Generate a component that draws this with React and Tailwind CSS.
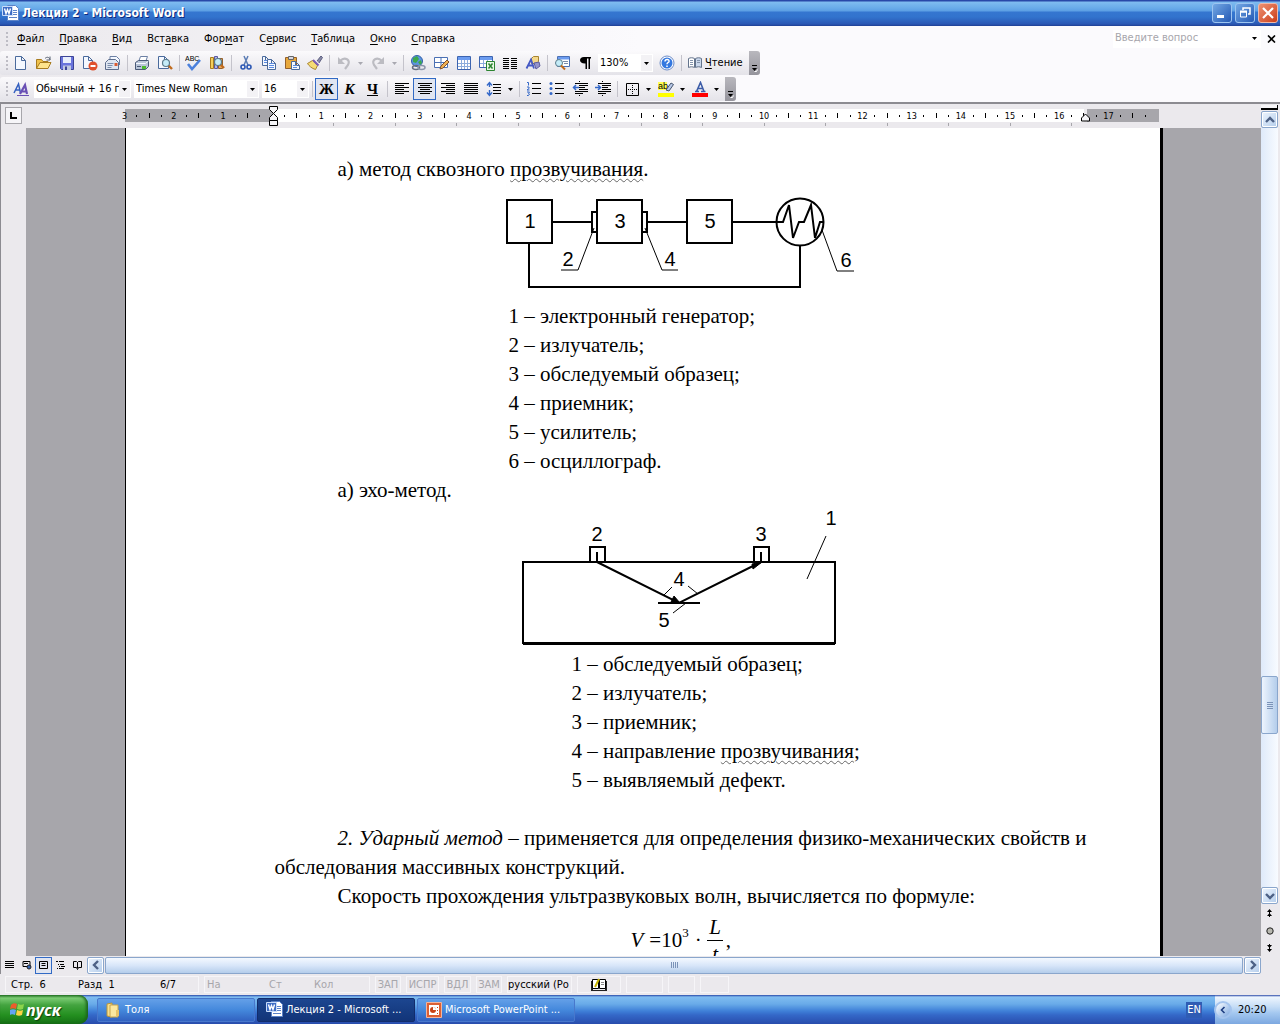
import React from "react";

function Svg({ w = 16, h = 16, children, className = "" }) {
  return (
    <svg width={w} height={h} viewBox={`0 0 ${w} ${h}`} fill="none" className={`shrink-0 ${className}`} aria-hidden="true">
      {children}
    </svg>
  );
}

const Page = ({ x = 2, y = 1, w = 10, h = 14 }) => (
  <path
    d={`M${x + 0.5} ${y + 0.5}H${x + w - 3.5}L${x + w + 0.5} ${y + 4.5}V${y + h - 0.5}H${x + 0.5}ZM${x + w - 3.5} ${y + 0.5}V${y + 4.5}H${x + w + 0.5}`}
    fill="#f4f8ff"
    stroke="#4a6a9c"
  />
);
const Lens = ({ x, y }) => (
  <g>
    <path d={`M${x + 2} ${y + 2}l4 4`} stroke="#c06a1c" strokeWidth="2.4" />
    <circle cx={x} cy={y} r="3.5" fill="#c4ecf8" stroke="#5b7c8c" strokeWidth="1.2" />
  </g>
);

const icons = {
  word: (
    <Svg w={17} h={17}>
      <path d="M5.500 .5h8l3 3v12h-11z" fill="#fff" stroke="#5b83c8" />
      <path d="M11 5.500h4M11 7.500h4M11 9.500h4M7 12.500h8" stroke="#5b83c8" />
      <path d="M.5 1.500h10v9h-10z" fill="#3d6cc4" stroke="#c8dcfa" />
      <path d="M2.500 3.500l1.500 5 1.500-4 1.500 4 1.500-5" stroke="#fff" strokeWidth="1.400" />
    </Svg>
  ),
  fresh: <Svg><Page x={2} y={1} w={10} h={14} /></Svg>,
  open: (
    <Svg w={18}>
      <path d="M1.500 13.500v-9h5l1.500 2h5v2" fill="#f0c24c" stroke="#a87c20" />
      <path d="M1.500 13.500l3.500-6h11l-3 6z" fill="#ffe48c" stroke="#a87c20" />
      <path d="M10 3.500c2-2 4-1.500 5 1m0-3v3.500h-3.500" stroke="#555f70" />
    </Svg>
  ),
  save: (
    <Svg>
      <path d="M1.500 1.500h13v13h-12l-1-1z" fill="#6a74dc" stroke="#3c4496" />
      <path d="M4 2h8v6H4z" fill="#e8eefc" />
      <path d="M4 10.500h8V15H4z" fill="#c0c8e0" />
      <path d="M6 11.500h2V15H6z" fill="#3c4496" />
    </Svg>
  ),
  perm: (
    <Svg>
      <Page x={1} y={1} w={9} h={13} />
      <circle cx="11" cy="11" r="4.500" fill="#e0502c" />
      <path d="M8.500 11h5" stroke="#fff" strokeWidth="2" />
    </Svg>
  ),
  mail: (
    <Svg>
      <path d="M5 5V1.500h6.500l3 3V10" fill="#f4f8ff" stroke="#6c80a4" />
      <path d="M.5 7.500l3-3h7l3 3v7H.5z" fill="#dfe6f2" stroke="#5c6c8c" />
      <path d="M2.500 8.500h6M2.500 10.500h5M2.500 12.500h4" stroke="#7b8caa" />
      <path d="M9.500 8h3v3h-3z" fill="#dc5a30" />
    </Svg>
  ),
  print: (
    <Svg>
      <path d="M4.500 7l2-5.500h7l-2 5.500" fill="#fff" stroke="#6c80a4" />
      <path d="M1.500 7.500l3-2h10v6l-3 3h-10z" fill="#b9c5d8" stroke="#4a5a78" />
      <path d="M2 8.500h9.500l3-2.500" stroke="#f4f8ff" />
      <path d="M8 11h4v3H8z" fill="#4cba30" />
      <path d="M3 11.500h4" stroke="#4a5a78" />
    </Svg>
  ),
  preview: <Svg><Page x={1} y={1} w={10} h={13} /><Lens x={9} y={8} /></Svg>,
  spell: (
    <Svg w={18}>
      <text x="0" y="6" fontSize="7" fontFamily="Liberation Sans" fill="#000">ABC</text>
      <path d="M3 9l4 5 8-9" stroke="#4b80dc" strokeWidth="2.600" />
    </Svg>
  ),
  research: (
    <Svg>
      <path d="M1.500 2.500h3v11h-3z" fill="#f4cf5c" stroke="#a87c20" />
      <path d="M5.500 1.500h3v12h-3z" fill="#b4b4e8" stroke="#5a5aa0" />
      <path d="M9.500 3.500h4v10h-4z" fill="#e8a860" stroke="#94602c" />
      <Lens x={9} y={7} />
    </Svg>
  ),
  cut: (
    <Svg>
      <path d="M6 1l4 9M10 1L6 10" stroke="#5b7cb4" strokeWidth="1.500" />
      <circle cx="5" cy="12" r="2" stroke="#2c58b4" strokeWidth="1.600" />
      <circle cx="11" cy="12" r="2" stroke="#2c58b4" strokeWidth="1.600" />
    </Svg>
  ),
  copy: (
    <Svg>
      <Page x={1} y={1} w={7} h={10} />
      <path d="M3 5.500h4M3 7.500h4" stroke="#5b8be0" />
      <Page x={6} y={4} w={8} h={11} />
      <path d="M8 8.500h5M8 10.500h5M8 12.500h5" stroke="#5b8be0" />
    </Svg>
  ),
  paste: (
    <Svg>
      <path d="M1.500 2.500h11v11h-11z" fill="#e8a83c" stroke="#94602c" />
      <path d="M4.500 1.500h5v3h-5z" fill="#d8d8e0" stroke="#666" />
      <Page x={7} y={6} w={8} h={9} />
      <path d="M9 10.500h4M9 12.500h4" stroke="#5b8be0" />
    </Svg>
  ),
  brush: (
    <Svg>
      <path d="M10 6l4-5 1.500 1.500L12 8" fill="#8a8ca8" stroke="#5c5e80" />
      <path d="M5.500 5.500l5 5-2 4C5 13.500 2 11 .5 8.500z" fill="#f6dc74" stroke="#a88430" />
      <path d="M6 5l5.500 5.500" stroke="#7b5cb4" strokeWidth="2" />
    </Svg>
  ),
  undo: (
    <Svg>
      <path d="M4 6c5-5 11-1 8 4l-3 4" stroke="#bcbcc2" strokeWidth="2.200" />
      <path d="M2 2v7h7z" fill="#bcbcc2" />
    </Svg>
  ),
  redo: (
    <Svg>
      <path d="M12 6C7 1 1 5 4 10l3 4" stroke="#bcbcc2" strokeWidth="2.200" />
      <path d="M14 2v7H7z" fill="#bcbcc2" />
    </Svg>
  ),
  link: (
    <Svg>
      <circle cx="7" cy="6" r="5.500" fill="#5b94e0" stroke="#3460a8" />
      <path d="M3 3l4-2 2 3-3 4-3-1zM8 7l3-2 1 3-2 2z" fill="#3ca84c" />
      <ellipse cx="6" cy="12.500" rx="3.500" ry="2" stroke="#666e80" strokeWidth="1.500" />
      <ellipse cx="11.500" cy="12.500" rx="3.500" ry="2" stroke="#8c96aa" strokeWidth="1.500" />
    </Svg>
  ),
  drawTable: (
    <Svg>
      <path d="M1.500 2.500h13v10h-13zM8 3v9M2 7.500h12" fill="#fff" stroke="#4b70b4" />
      <path d="M7 14l1-3 6-6 2 2-6 6z" fill="#f0b050" stroke="#80502c" />
    </Svg>
  ),
  table: (
    <Svg>
      <path d="M1.500 1.500h13v13h-13z" fill="#fff" stroke="#3c64b0" />
      <path d="M2 2h12v3H2z" fill="#6c9cf0" />
      <path d="M5.500 5v9M8.500 5v9M11.500 5v9M2 8.500h12M2 11.500h12" stroke="#8cacdc" />
    </Svg>
  ),
  excel: (
    <Svg>
      <path d="M.5 1.500h13v11H.5z" fill="#fff" stroke="#3c64b0" />
      <path d="M1 2h12v3H1z" fill="#6c9cf0" />
      <path d="M4.500 5v7M8.500 5v7M1 8.500h12" stroke="#8cacdc" />
      <path d="M7.500 6.500h8v9h-8z" fill="#e8f8e4" stroke="#2c8430" />
      <path d="M9.500 8.500l4 5M13.500 8.500l-4 5" stroke="#2c8430" strokeWidth="1.500" />
    </Svg>
  ),
  columns: (
    <Svg>
      <path d="M1 3.500h6M9 3.500h6M1 5.500h6M9 5.500h6M1 7.500h6M9 7.500h6M1 9.500h6M9 9.500h6M1 11.500h6M9 11.500h6M1 13.500h6M9 13.500h6" stroke="#000" />
    </Svg>
  ),
  drawing: (
    <Svg>
      <path d="M6.500 3.500l2-2h5v5l-2 2h-5z" fill="#f4d88c" stroke="#a88430" />
      <path d="M9 8l5-1 1 4-4 3z" fill="#9494cc" stroke="#5c5ca0" />
      <path d="M1.500 13.500L6 4.500l3 9M3 10.500h5" stroke="#4458c4" strokeWidth="1.800" />
    </Svg>
  ),
  map: (
    <Svg>
      <path d="M3.500 1.500h12v10h-12z" fill="#fff" stroke="#4b70b4" />
      <path d="M4 2h11v2.500H4z" fill="#6c9cf0" />
      <path d="M9 6.500h5M10 8.500h4" stroke="#7b8caa" />
      <circle cx="5" cy="8" r="3.500" fill="#c4ecf8" stroke="#5b7c8c" />
      <path d="M7 10.500l4 4" stroke="#c06a1c" strokeWidth="2" />
    </Svg>
  ),
  pilcrow: (
    <Svg>
      <path d="M7 2h7v1.500h-1V14h-1.500V3.500H10V14H8.500V8.500C1.500 9 1.500 2 7 2z" fill="#000" />
    </Svg>
  ),
  help: (
    <Svg>
      <circle cx="8" cy="8" r="7" fill="#fff" stroke="#6c8cc8" />
      <circle cx="8" cy="8" r="5.500" fill="#3478e0" />
      <path d="M6 6.500c0-3 4.500-2.500 4 0-.3 1-2 1.200-2 2.700M8 10.500v1.500" stroke="#fff" strokeWidth="1.500" />
    </Svg>
  ),
  book: (
    <Svg>
      <path d="M1.500 3.500c2-1 4-1 6 0v9c-2-1-4-1-6 0z" fill="#fff" stroke="#64748c" />
      <path d="M8.500 3.500c2-1 4-1 6 0v9c-2-1-4-1-6 0z" fill="#cbd8ec" stroke="#64748c" />
      <path d="M3 5.500h3M3 7.500h3M3 9.500h3M10 5.500h3M10 7.500h3" stroke="#8494ac" />
    </Svg>
  ),
  styles: (
    <Svg>
      <path d="M1 12L5.500 3l2 9M3 9h4" stroke="#3460c0" strokeWidth="1.500" />
      <path d="M7 13l5-9 2 9M8.500 10.500h5" stroke="#6a50b4" strokeWidth="2.200" />
      <path d="M4 14.500h12" stroke="#6a50b4" />
    </Svg>
  ),
  left: <Svg><path d="M1 2.500h14M1 4.500h9M1 6.500h14M1 8.500h9M1 10.500h14M1 12.500h9" stroke="#000" /></Svg>,
  center: <Svg><path d="M1 2.500h14M3 4.500h10M1 6.500h14M3 8.500h10M1 10.500h14M3 12.500h10" stroke="#000" /></Svg>,
  right: <Svg><path d="M1 2.500h14M6 4.500h9M1 6.500h14M6 8.500h9M1 10.500h14M6 12.500h9" stroke="#000" /></Svg>,
  justify: <Svg><path d="M1 2.500h14M1 4.500h14M1 6.500h14M1 8.500h14M1 10.500h14M1 12.500h14" stroke="#000" /></Svg>,
  spacing: (
    <Svg>
      <path d="M7 3.500h8M7 6.500h8M7 9.500h8M7 12.500h8" stroke="#000" />
      <path d="M3.500 2v4M3.500 9v5M1 4.500l2.500-3 2.500 3M1 11.500l2.500 3 2.500-3" stroke="#3468c8" strokeWidth="1.400" />
    </Svg>
  ),
  numbers: (
    <Svg>
      <path d="M6 2.500h9M6 7.500h9M6 12.500h9" stroke="#000" />
      <path d="M1 1.500h1.500v3M1 6h2v1.500l-2 1.500h2.500M1 11h2.500l-1 1.500 1 .5-1 1.500H1" stroke="#3468c8" />
    </Svg>
  ),
  bullets: (
    <Svg>
      <path d="M6 2.500h9M6 7.500h9M6 12.500h9" stroke="#000" />
      <circle cx="2" cy="2.500" r="1.500" fill="#3468c8" /><circle cx="2" cy="7.500" r="1.500" fill="#3468c8" /><circle cx="2" cy="12.500" r="1.500" fill="#3468c8" />
    </Svg>
  ),
  outdent: (
    <Svg>
      <path d="M3 2.500h13M8 4.500h8M8 6.500h5M8 8.500h8M3 10.500h13M3 12.500h8" stroke="#000" />
      <path d="M7.500 0v15" stroke="#000" strokeDasharray="1 1" />
      <path d="M1 6.500h6M4 4L1.500 6.500 4 9" stroke="#3468c8" strokeWidth="1.500" />
    </Svg>
  ),
  indent: (
    <Svg>
      <path d="M3 2.500h13M8 4.500h8M8 6.500h5M8 8.500h8M3 10.500h13M3 12.500h8" stroke="#000" />
      <path d="M7.500 0v15" stroke="#000" strokeDasharray="1 1" />
      <path d="M0 6.500h6M3 4l2.500 2.500L3 9" stroke="#3468c8" strokeWidth="1.500" />
    </Svg>
  ),
  border: (
    <Svg>
      <path d="M2.500 2.500h12v12h-12z" stroke="#000" />
      <path d="M8.500 4v9M4 8.500h9" stroke="#000" strokeDasharray="1 1" />
    </Svg>
  ),
  highlight: (
    <Svg>
      <path d="M0 1h9v8H0z" fill="#ffff54" />
      <text x="0" y="8" fontSize="9" fontFamily="Liberation Sans" fill="#000">ab</text>
      <path d="M8 9l5-7 2.500 1.500L11 10z" fill="#b8c8e8" stroke="#44546c" />
      <path d="M0 12h16v4H0z" fill="#ff0" />
    </Svg>
  ),
  fontColor: (
    <Svg>
      <path d="M3 10.500h4M9 10.500h4.500M4.500 10.500l4-9 3.500 9M6 7.500h5" stroke="#3c5ca8" strokeWidth="1.600" />
      <path d="M0 12h16v4H0z" fill="#f00" />
    </Svg>
  ),
};

function Tool({ icon, label, active, children }) {
  return (
    <button
      type="button"
      aria-label={label}
      className={`flex h-[22px] w-[23px] shrink-0 items-center justify-center ${active ? "border border-[#316ac5] bg-[#e0e5f1]" : ""}`}
    >
      {children || icons[icon]}
    </button>
  );
}

const Triangle = ({ fill = "#000" }) => (
  <Svg w={5} h={3}><path d="M0 0h5L2.500 3z" fill={fill} /></Svg>
);

function Arrow({ disabled, label }) {
  return (
    <button type="button" aria-label={label} className="flex h-[22px] w-[11px] shrink-0 items-center justify-center">
      <Triangle fill={disabled ? "#a8a8b0" : "#000"} />
    </button>
  );
}

const Sep = () => (
  <span className="flex w-[6px] shrink-0 justify-center">
    <span className="h-4 w-px bg-[#c4c3cb]" />
  </span>
);

const Grip = () => (
  <span className="flex w-[3px] shrink-0 flex-col gap-[2px]">
    {[0, 1, 2, 3].map((i) => <span key={i} className="h-[2px] w-[2px] bg-[#bdbcc4]" />)}
  </span>
);

function Combo({ label, value, className }) {
  return (
    <label className={`relative flex h-[18px] shrink-0 bg-white ${className}`}>
      <select aria-label={label} className="w-full appearance-none bg-transparent pr-[8px] pl-[2px] text-[11px] leading-4 outline-none">
        <option>{value}</option>
      </select>
      <span className="pointer-events-none absolute inset-y-px right-px flex w-[11px] items-center justify-center bg-[#f3f2f5]">
        <Triangle />
      </span>
    </label>
  );
}

function Cap() {
  return (
    <button type="button" aria-label="Параметры панелей инструментов" className="flex h-6 w-[11px] shrink-0 flex-col items-center justify-end rounded-r-[3px] bg-gradient-to-b from-[#b9b8be] to-[#95949c] pb-[3px]">
      <Svg w={7} h={7}><path d="M1 .5h5" stroke="#000" /><path d="M1 3h5L3.500 6z" fill="#000" /><path d="M3.500 6.500h2l1-2" stroke="#fff" /></Svg>
    </button>
  );
}

const menus = [
  ["", "Ф", "айл"], ["", "П", "равка"], ["", "В", "ид"], ["Вст", "а", "вка"], ["Фор", "м", "ат"],
  ["С", "е", "рвис"], ["", "Т", "аблица"], ["", "О", "кно"], ["", "С", "правка"],
];

function TitleBar() {
  return (
    <header className="flex h-[26px] shrink-0 items-center bg-[linear-gradient(#2848a8_0px,#2848a8_1px,#7fbcf0_2px,#69abe9_8px,#5c9fe4_11px,#3576d0_12px,#3273cd_17px,#2a57b4_24px,#1f3f94_26px)] pr-[2px] pl-[2px]">
      {icons.word}
      <h1 className="ml-[3px] flex-1 text-[12px] leading-4 font-bold text-white [text-shadow:1px_1px_0_#0c2a80]">Лекция 2 - Microsoft Word</h1>
      <div className="flex gap-[3px]">
        <button type="button" aria-label="Свернуть" className="flex size-5 items-center justify-center rounded-[3px] border border-[#9cc4f0] bg-gradient-to-br from-[#74a8e4] to-[#2458b4]">
          <Svg w={12} h={12}><path d="M1 8h7v3H1z" fill="#fff" /></Svg>
        </button>
        <button type="button" aria-label="Восстановить" className="flex size-5 items-center justify-center rounded-[3px] border border-[#9cc4f0] bg-gradient-to-br from-[#74a8e4] to-[#2458b4]">
          <Svg w={12} h={12}><path d="M4 3V1h7v6H9" stroke="#fff" strokeWidth="1.500" /><path d="M1.500 5h6v5h-6z" stroke="#fff" /><path d="M1 4.500h7" stroke="#fff" strokeWidth="2" /></Svg>
        </button>
        <button type="button" aria-label="Закрыть" className="flex size-5 items-center justify-center rounded-[3px] border border-[#f0b8a8] bg-gradient-to-br from-[#ec9070] to-[#cc3c14]">
          <Svg w={12} h={12}><path d="M1 1l10 10M11 1L1 11" stroke="#fff" strokeWidth="2.200" /></Svg>
        </button>
      </div>
    </header>
  );
}

function MenuBar() {
  return (
    <nav className="flex h-[25px] shrink-0 items-center pl-[6px]">
      <Grip />
      <div className="flex flex-1">
        {menus.map(([a, b, c]) => (
          <button key={a + b + c} type="button" className="pr-[7px] pl-2 text-[11px] leading-4">
            {a}<span className="underline underline-offset-2">{b}</span>{c}
          </button>
        ))}
      </div>
      <div className="flex h-[18px] w-[148px] items-center bg-white pr-[4px]">
        <input aria-label="Введите вопрос" placeholder="Введите вопрос" className="w-full min-w-0 pl-[2px] text-[11px] outline-none placeholder:text-[#a7a6ac]" />
        <Triangle />
      </div>
      <button type="button" aria-label="Закрыть документ" className="mr-[4px] ml-[6px]">
        <Svg w={9} h={8}><path d="M1 .5l7 7M8 .5l-7 7" stroke="#000" strokeWidth="1.600" /></Svg>
      </button>
    </nav>
  );
}

const bar = "flex h-6 items-center self-start rounded-[3px] bg-gradient-to-b from-[#fbfafc] to-[#e4e3e9] pl-[6px]";

function Toolbars() {
  return (
    <div className="flex shrink-0 flex-col gap-[2px] pb-px">
      <div className={bar} role="toolbar" aria-label="Стандартная">
        <Grip />
        <Tool icon="fresh" label="Создать" />
        <Tool icon="open" label="Открыть" />
        <Tool icon="save" label="Сохранить" />
        <Tool icon="perm" label="Разрешения" />
        <Tool icon="mail" label="Сообщение" />
        <Sep />
        <Tool icon="print" label="Печать" />
        <Tool icon="preview" label="Предварительный просмотр" />
        <Sep />
        <Tool icon="spell" label="Правописание" />
        <Tool icon="research" label="Справочные материалы" />
        <Sep />
        <Tool icon="cut" label="Вырезать" />
        <Tool icon="copy" label="Копировать" />
        <Tool icon="paste" label="Вставить" />
        <Tool icon="brush" label="Формат по образцу" />
        <Sep />
        <Tool icon="undo" label="Отменить" />
        <Arrow disabled label="Список отмены" />
        <Tool icon="redo" label="Вернуть" />
        <Arrow disabled label="Список возврата" />
        <Sep />
        <Tool icon="link" label="Гиперссылка" />
        <Tool icon="drawTable" label="Таблицы и границы" />
        <Tool icon="table" label="Добавить таблицу" />
        <Tool icon="excel" label="Лист Excel" />
        <Tool icon="columns" label="Колонки" />
        <Tool icon="drawing" label="Рисование" />
        <Sep />
        <Tool icon="map" label="Схема документа" />
        <Tool icon="pilcrow" label="Непечатаемые знаки" />
        <Combo label="Масштаб" value="130%" className="mx-[2px] w-[55px]" />
        <Tool icon="help" label="Справка Word" />
        <Sep />
        <button type="button" className="flex w-[65px] items-center gap-[2px] pl-[3px] text-[11px] leading-4">
          {icons.book}
          <span><span className="underline underline-offset-2">Ч</span>тение</span>
        </button>
        <Cap />
      </div>
      <div className={bar} role="toolbar" aria-label="Форматирование">
        <Grip />
        <Tool icon="styles" label="Стили и форматирование" />
        <Combo label="Стиль" value="Обычный + 16 г" className="ml-[2px] w-[97px]" />
        <Combo label="Шрифт" value="Times New Roman" className="ml-[3px] w-[125px]" />
        <Combo label="Размер" value="16" className="ml-[3px] w-[47px]" />
        <Sep />
        <Tool active label="Полужирный"><span className="font-[Liberation_Serif] text-[15px] leading-5 font-bold">Ж</span></Tool>
        <Tool label="Курсив"><span className="font-[Liberation_Serif] text-[15px] leading-5 font-bold italic">К</span></Tool>
        <Tool label="Подчеркнутый"><span className="font-[Liberation_Serif] text-[15px] leading-5 font-bold underline">Ч</span></Tool>
        <Sep />
        <Tool icon="left" label="По левому краю" />
        <Tool active icon="center" label="По центру" />
        <Tool icon="right" label="По правому краю" />
        <Tool icon="justify" label="По ширине" />
        <Tool icon="spacing" label="Междустрочный интервал" />
        <Arrow label="Выбор интервала" />
        <Sep />
        <Tool icon="numbers" label="Нумерация" />
        <Tool icon="bullets" label="Маркеры" />
        <Tool icon="outdent" label="Уменьшить отступ" />
        <Tool icon="indent" label="Увеличить отступ" />
        <Sep />
        <Tool icon="border" label="Внешние границы" />
        <Arrow label="Выбор границ" />
        <Tool icon="highlight" label="Выделение цветом" />
        <Arrow label="Выбор цвета выделения" />
        <Tool icon="fontColor" label="Цвет шрифта" />
        <Arrow label="Выбор цвета шрифта" />
        <span className="w-[3px]" />
        <Cap />
      </div>
    </div>
  );
}

function RulerMark({ i }) {
  const cm = Math.floor(i / 4) - 3;
  const q = i % 4;
  if (q === 0) return cm === 0 ? null : <span>{Math.abs(cm)}</span>;
  return <span className={q === 2 ? "h-[5px] w-px bg-black" : "h-[2px] w-px bg-black"} />;
}

function Ruler() {
  return (
    <div className="flex h-6 shrink-0 items-start">
      <button type="button" aria-label="Табуляция" className="mt-[3px] ml-[4px] flex size-[17px] items-center justify-center border border-[#a7a6ab] bg-[#f6f5f8]">
        <Svg w={7} h={7}><path d="M1 0v6h6" stroke="#000" strokeWidth="2" /></Svg>
      </button>
      <div className="ml-[4px] flex flex-1 justify-center">
        <div className="relative mt-[5px] h-[13px] w-[1038px] pr-[4px]">
          <div className="h-[13px] bg-[linear-gradient(90deg,#a7a6ab_148px,#fff_148px,#fff_959px,#ebe9ed_959px,#ebe9ed_962px,#a7a6ab_962px)]">
            <div className="mr-[7px] -ml-[6px] flex h-[13px] text-[9px] leading-3">
              {Array.from({ length: 84 }, (_, i) => (
                <div key={i} className="flex w-0 flex-1 items-center justify-center"><RulerMark i={i} /></div>
              ))}
            </div>
          </div>
          <div className="ml-[148px] flex w-[800px] pt-px">
            {Array.from({ length: 13 }, (_, i) => <div key={i} className="h-[3px] flex-1 border-r border-[#a7a6ab]" />)}
          </div>
          <Svg w={11} h={21} className="absolute -top-[3px] left-[143px]">
            <path d="M1.500 .5h8v3l-4 4-4-4zM5.500 7.500l4 4v3h-8v-3z" fill="#f6f5f8" stroke="#000" />
            <path d="M1.500 14.500h8v5h-8z" fill="#f6f5f8" stroke="#000" />
          </Svg>
          <Svg w={11} h={9} className="absolute top-[4px] left-[955px]">
            <path d="M5.500 1l4 4v3h-8V5z" fill="#f6f5f8" stroke="#000" />
          </Svg>
        </div>
      </div>
    </div>
  );
}

const Label = ({ x, y, children }) => (
  <text x={x} y={y} fontSize="20" fontFamily="Liberation Sans" fill="#000" textAnchor="middle">{children}</text>
);

function ThroughDiagram() {
  return (
    <svg width="360" height="118" viewBox="500 184 360 118" className="ml-[225px] block" fill="none" stroke="#000" role="img" aria-label="Схема сквозного прозвучивания">
      <g strokeWidth="2">
        <path d="M507 200h45v43h-45zM597 200h45v43h-45zM687 200h45v43h-45zM592 212h5v20h-5zM642 212h5v20h-5z" />
        <path d="M552 222h40M647 222h40M732 222h51l6-17 4 33 6-16h5l7-17 4 33 5-16h4M529 243v44h271v-42" />
        <circle cx="800" cy="222" r="23.500" />
      </g>
      <path d="M594 228l-16 42h-17M645 228l17 42h16M822 230l15 41h17" />
      <g stroke="none">
        <Label x={530} y={228}>1</Label>
        <Label x={620} y={228}>3</Label>
        <Label x={710} y={228}>5</Label>
        <Label x={568} y={266}>2</Label>
        <Label x={670} y={266}>4</Label>
        <Label x={846} y={267}>6</Label>
      </g>
    </svg>
  );
}

function EchoDiagram() {
  return (
    <svg width="340" height="145" viewBox="510 505 340 145" className="ml-[235px] block" fill="none" stroke="#000" role="img" aria-label="Схема эхо-метода">
      <g strokeWidth="2">
        <path d="M523 562h312v81h-312zM590 562v-15h15v15M754 562v-15h15v15M597 552v10M761 552v10M658 603h42" />
        <path d="M597 562l82 41 82-41" />
      </g>
      <path d="M523 643.500h312" strokeWidth="3" />
      <path d="M680 603l-9-1 3-6zM762 562l-9 7-1-5z" fill="#000" />
      <path d="M664 595l8-8M688 586l10 8M673 613l13-10M826 536l-19 43" />
      <g stroke="none">
        <Label x={597} y={541}>2</Label>
        <Label x={761} y={541}>3</Label>
        <Label x={831} y={525}>1</Label>
        <Label x={679} y={586}>4</Label>
        <Label x={664} y={627}>5</Label>
      </g>
    </svg>
  );
}

const Wavy = ({ children }) => (
  <span className="underline decoration-[#666] decoration-wavy decoration-1 underline-offset-2">{children}</span>
);

function Document() {
  return (
    <main className="flex min-h-0 flex-1 justify-center overflow-hidden bg-[#a7a6ab]">
      <article className="w-[1038px] border-r-[3px] border-l border-black bg-white pt-[27px] pr-[73px] pl-[149px] font-[Liberation_Serif] text-[21px] leading-[29px] text-black">
        <p className="indent-[63px]">а) метод сквозного <Wavy>прозвучивания</Wavy>.</p>
        <ThroughDiagram />
        <ul className="ml-[234px]">
          <li>1 – электронный генератор;</li>
          <li>2 – излучатель;</li>
          <li>3 – обследуемый образец;</li>
          <li>4 – приемник;</li>
          <li>5 – усилитель;</li>
          <li>6 – осциллограф.</li>
        </ul>
        <p className="indent-[63px]">а) эхо-метод.</p>
        <EchoDiagram />
        <ul className="ml-[297px]">
          <li>1 – обследуемый образец;</li>
          <li>2 – излучатель;</li>
          <li>3 – приемник;</li>
          <li>4 – направление <Wavy>прозвучивания</Wavy>;</li>
          <li>5 – выявляемый дефект.</li>
        </ul>
        <p className="mt-[29px] text-justify indent-[63px]">
          <i>2. Ударный метод</i> – применяется для определения физико-механических свойств и обследования массивных конструкций.
        </p>
        <p className="indent-[63px]">Скорость прохождения ультразвуковых волн, вычисляется по формуле:</p>
        <div className="mt-[3px] ml-[356px] flex items-center">
          <i className="mr-[6px]">V</i>
          <span>=10</span>
          <sup className="-mt-[2px] text-[13px] leading-4">3</sup>
          <span className="mx-[6px]">·</span>
          <span className="flex w-[15px] flex-col items-center leading-[26px] italic">
            <span className="border-b border-black px-[2px]">L</span>
            <span>t</span>
          </span>
          <span className="ml-[3px]">,</span>
        </div>
      </article>
    </main>
  );
}

const chevrons = { up: "M1 7l4-4 4 4", down: "M1 3l4 4 4-4", left: "M7 1L3 5l4 4", right: "M3 1l4 4-4 4" };

function ScrollButton({ dir, label }) {
  return (
    <button type="button" aria-label={label} className="flex size-[17px] shrink-0 items-center justify-center rounded-[2px] border border-[#8aa6cc] bg-gradient-to-br from-[#eef5fe] to-[#b4cdeb] shadow-[inset_0_0_0_1px_#fff]">
      <Svg w={10} h={10}><path d={chevrons[dir]} stroke="#4d6185" strokeWidth="2.400" /></Svg>
    </button>
  );
}

function VerticalScroll() {
  return (
    <aside className="flex w-[19px] shrink-0 flex-col items-center bg-[#ebe9ed] pt-px pr-[2px]">
      <span className="mb-px h-[5px] w-full border-r border-b-2 border-black bg-[#f6f5f8]" />
      <ScrollButton dir="up" label="Вверх" />
      <div className="flex w-[17px] flex-1 flex-col bg-gradient-to-r from-[#dfeafa] to-[#f8fbff]">
        <span className="flex-[552]" />
        <button type="button" aria-label="Прокрутка по вертикали" className="flex h-[58px] w-full flex-col items-center justify-center gap-px rounded-[2px] border border-[#8aa6cc] bg-gradient-to-r from-[#eef5fe] to-[#b4cdeb]">
          {[0, 1, 2, 3].map((i) => <span key={i} className="h-px w-[6px] bg-[#7b93b8]" />)}
        </button>
        <span className="flex-[154]" />
      </div>
      <ScrollButton dir="down" label="Вниз" />
      <div className="mb-[18px] flex h-[52px] flex-col items-center justify-between pt-[5px] pb-[4px]">
        <button type="button" aria-label="Предыдущая страница"><Svg w={7} h={8} className="block"><path d="M3.500 0L6 3H1zM3.500 4L6 7H1zM3 2h1v6H3z" fill="#000" /></Svg></button>
        <button type="button" aria-label="Выбор объекта перехода"><Svg w={8} h={8} className="block"><circle cx="4" cy="4" r="3.200" fill="#b8b8b0" stroke="#222" /></Svg></button>
        <button type="button" aria-label="Следующая страница"><Svg w={7} h={8} className="block"><path d="M1 1h5L3.500 4zM1 5h5L3.500 8zM3 0h1v6H3z" fill="#000" /></Svg></button>
      </div>
    </aside>
  );
}

function ViewButton({ label, active, children }) {
  return (
    <button type="button" aria-label={label} className={`flex size-[17px] shrink-0 items-center justify-center ${active ? "border border-[#316ac5] bg-[#e0e5f1]" : ""}`}>
      <Svg w={11} h={10}>{children}</Svg>
    </button>
  );
}

function HorizontalScroll() {
  return (
    <div className="flex h-[18px] shrink-0 items-center bg-[#ebe9ed]">
      <div className="flex pr-px">
        <ViewButton label="Обычный"><path d="M1 1.500h9M1 3.500h9M1 5.500h9M1 7.500h9" stroke="#000" /></ViewButton>
        <ViewButton label="Веб-документ"><path d="M2 1.500h7v5H2zM3 3.500h4" stroke="#000" /><circle cx="8" cy="7" r="2" fill="#3464b4" stroke="#222" /></ViewButton>
        <ViewButton label="Разметка страницы" active><path d="M1.500 1.500h8v7h-8zM3.500 3.500h4M3.500 5.500h4" stroke="#000" /></ViewButton>
        <ViewButton label="Структура"><path d="M1 1.500h2M4 1.500h5M3 4.500h1M5 4.500h4M4 6.500h1M6 6.500h4M2 8.500h1M4 8.500h5" stroke="#000" /></ViewButton>
        <ViewButton label="Режим чтения"><path d="M1.500 1.500h3l1 1 1-1h3v6h-3l-1 2-1-2h-3zM5.500 2v6" stroke="#000" /></ViewButton>
      </div>
      <ScrollButton dir="left" label="Влево" />
      <button type="button" aria-label="Прокрутка по горизонтали" className="mx-px flex h-[17px] flex-1 items-center justify-center gap-px rounded-[2px] border border-[#8aa6cc] bg-gradient-to-b from-[#f4f9ff] via-[#d8e6f9] to-[#b4cdeb]">
        {[0, 1, 2, 3].map((i) => <span key={i} className="h-[6px] w-px bg-[#7b93b8]" />)}
      </button>
      <ScrollButton dir="right" label="Вправо" />
    </div>
  );
}

const cell = "flex h-[17px] shrink-0 items-center border border-[#f6f5f8]";

function StatusBar() {
  return (
    <footer className="flex h-[21px] shrink-0 items-center gap-[5px] bg-[#ebe9ed] pl-[5px] text-[11px] leading-4">
      <div className={`${cell} w-[194px] pl-[5px]`}>
        <span className="w-[67px] whitespace-pre">Стр.  6</span>
        <span className="w-[82px] whitespace-pre">Разд  1</span>
        <span>6/7</span>
      </div>
      <div className={`${cell} w-[166px] pl-[2px] text-[#a7a6ab]`}>
        <span className="w-[62px]">На</span>
        <span className="w-[45px]">Ст</span>
        <span>Кол</span>
      </div>
      <div className={`${cell} w-[26px] justify-center text-[#a7a6ab]`}>ЗАП</div>
      <div className={`${cell} w-[33px] justify-center text-[#a7a6ab]`}>ИСПР</div>
      <div className={`${cell} w-[27px] justify-center text-[#a7a6ab]`}>ВДЛ</div>
      <div className={`${cell} w-[26px] justify-center text-[#a7a6ab]`}>ЗАМ</div>
      <div className={`${cell} w-[65px] whitespace-nowrap`}>русский (Ро</div>
      <div className={`${cell} w-[44px] justify-center`}>
        <Svg w={18} h={14}>
          <path d="M1 3h2v9h12V3h2v10H1z" fill="#222" />
          <path d="M2.500 1.500h6v9h-6zM9.500 1.500h6v9h-6z" fill="#fff" stroke="#000" />
          <path d="M11 4.500h3M11 6.500h3" stroke="#888" />
          <path d="M5 9l4-8" stroke="#c8b400" strokeWidth="2" />
        </Svg>
      </div>
      <div className={`${cell} w-[37px]`} />
      <div className={`${cell} w-[27px]`} />
      <div className={`${cell} w-[29px]`} />
    </footer>
  );
}

function TaskButton({ icon, label, active }) {
  return (
    <button
      type="button"
      className={`flex h-6 w-[158px] shrink-0 items-center gap-[3px] rounded-[2px] border pl-[8px] text-[11px] leading-4 text-white ${active ? "border-[#122c6c] bg-gradient-to-b from-[#1c4690] to-[#123478]" : "border-[#4878cc] bg-gradient-to-b from-[#64a0e8] via-[#4488dc] to-[#3262c0]"}`}
    >
      {icon}
      {label}
    </button>
  );
}

function TaskBar() {
  return (
    <div className="flex h-[29px] shrink-0 items-center bg-[linear-gradient(#2848a8_0px,#7fbcf0_2px,#69abe9_9px,#3f80d8_16px,#3468c8_20px,#284cac_29px)]">
      <button type="button" className="mr-[9px] flex h-[29px] w-[88px] shrink-0 items-center gap-px rounded-r-[9px] bg-[linear-gradient(#2c7c2c,#7ccc74_3px,#44a440_10px,#249020_20px,#147014)] pl-[10px] shadow-[inset_-2px_0_3px_#1c641c]">
        <Svg w={15} h={15}>
          <path d="M1 3c2-2 4-2 6-1L6 7C4 6 2 6 0 7z" fill="#ec5c2c" />
          <path d="M8 2c2 1 4 1 6 0l-1 5c-2 1-4 1-6 0z" fill="#8cd44c" />
          <path d="M0 8c2-1 4-1 6 0l-1 5C3 12 1 12 0 13z" fill="#64a4f4" />
          <path d="M7 8c2 1 4 1 6 0l-1 5c-2 1-4 1-6 0z" fill="#fcd444" />
        </Svg>
        <span className="font-[Open_Sans] text-[16px] leading-5 font-bold text-white italic [text-shadow:1px_1px_1px_#0c400c]">пуск</span>
      </button>
      <div className="flex flex-1 gap-[2px]">
        <TaskButton label="Толя" icon={<Svg w={16} h={16}><path d="M1 2l5-1v14l-5-1z" fill="#f8e08c" stroke="#b89438" /><path d="M4 3h8v12H4z" fill="#fae8a0" stroke="#c8a44c" /><path d="M10 8h3v6h-3z" fill="#e8c468" /></Svg>} />
        <TaskButton active label="Лекция 2 - Microsoft ..." icon={icons.word} />
        <TaskButton
          label="Microsoft PowerPoint ..."
          icon={
            <Svg>
              <path d="M.5 .5h15v15H.5z" fill="#dc6034" stroke="#f4b49c" />
              <path d="M3 3h10v10H3z" fill="#fff" />
              <circle cx="7" cy="8" r="3" fill="#c84418" />
              <path d="M7 8V5a3 3 0 013 3z" fill="#fff" />
              <path d="M11 5.500h1M11 8.500h1M11 11.500h1" stroke="#c84418" />
            </Svg>
          }
        />
      </div>
      <button type="button" aria-label="Язык ввода: EN" className="mr-[13px] h-4 w-4 bg-[#2f5cb4] text-center text-[11px] leading-4 text-white">EN</button>
      <div className="flex h-full w-[65px] items-center bg-[linear-gradient(#2848a8_0px,#eef6fe_2px,#c4dcf6_12px,#a4c8f0_18px,#7ca8e0_29px)]">
        <button type="button" aria-label="Показать скрытые значки" className="-ml-[1px] flex size-[18px] items-center justify-center rounded-full border-2 border-[#a4c4ee] bg-gradient-to-br from-white to-[#7ca8e0]">
          <Svg w={8} h={8}><path d="M5.500 1L2.500 4l3 3" stroke="#1c3c80" strokeWidth="1.600" /></Svg>
        </button>
        <time className="ml-[6px] text-[11px] leading-4 text-black">20:20</time>
      </div>
    </div>
  );
}

export default function App() {
  return (
    <div className="flex h-screen flex-col overflow-hidden bg-[linear-gradient(90deg,#ebe9ed,#fbfafd_50%)] font-['DejaVu_Sans_Condensed','DejaVu_Sans',sans-serif] text-black">
      <TitleBar />
      <MenuBar />
      <Toolbars />
      <div className="flex min-h-0 flex-1 border-t-2 border-l border-[#8c8b91] bg-[#ebe9ed]">
        <div className="flex min-w-0 flex-1 flex-col">
          <Ruler />
          <div className="flex min-h-0 flex-1 pl-[25px]"><Document /></div>
          <HorizontalScroll />
        </div>
        <VerticalScroll />
      </div>
      <StatusBar />
      <TaskBar />
    </div>
  );
}
